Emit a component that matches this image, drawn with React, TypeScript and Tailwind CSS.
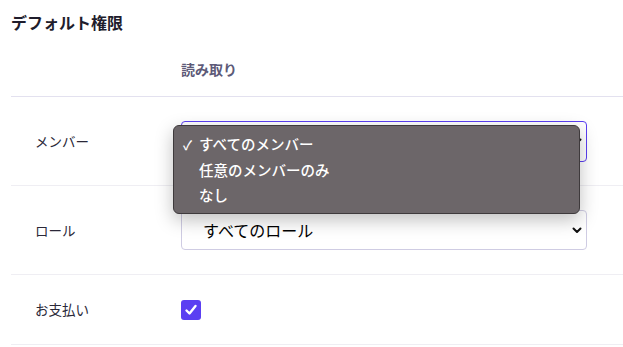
import React from "react";

const Chevron = () => (
  <svg width="10" height="7" viewBox="0 0 10 7" className="shrink-0">
    <path d="M1.5 1.5 L5 5 L8.5 1.5" fill="none" stroke="#111" strokeWidth="2" strokeLinecap="round" strokeLinejoin="round" />
  </svg>
);

const options = ["すべてのメンバー", "任意のメンバーのみ", "なし"];

const App = () => {
  return (
    <div
      className="h-[347px] w-[623px] overflow-hidden bg-white pl-[11px]"
      style={{ fontFamily: '"Noto Sans CJK JP", "Noto Sans", sans-serif' }}
    >
      <h2 className="pt-[11px] text-[16px] leading-[22px] font-bold text-[#1f1d2c]">
        デフォルト権限
      </h2>

      {/* header */}
      <div className="flex h-[64px] border-b border-[#e3e1ef] pt-[26px]">
        <div className="w-[170px]" />
        <div className="text-[14px] leading-[20px] font-bold text-[#5d5a78]">
          読み取り
        </div>
      </div>

      {/* members */}
      <div className="flex h-[89px] items-center border-b border-[#efeef3]">
        <div className="w-[170px] pl-[24px] text-[13.5px] text-[#2a2838]">メンバー</div>
        <div className="relative">
          <div className="flex h-[41px] w-[406px] items-center justify-between rounded-[4px] border-[1.5px] border-[#5b3ff2] pr-[4px] pl-[21px] text-[16px] text-black">
            <span className="invisible">すべてのメンバー</span>
            <Chevron />
          </div>

          {/* open menu */}
          <div className="absolute top-[4px] left-[-8px] w-[407px] rounded-[6px] border border-[#3e3a3c] bg-[#6c6669] pt-[6px] pb-[5px] shadow-[0_6px_18px_rgba(0,0,0,0.25)]">
            {options.map((o, i) => (
              <div key={o} className="flex h-[25.5px] items-center text-[14.5px] font-medium text-white">
                <span className="w-[25px] pl-[9px] text-[13px]">{i === 0 ? "✓" : ""}</span>
                <span>{o}</span>
              </div>
            ))}
          </div>
        </div>
      </div>

      {/* roles */}
      <div className="flex h-[89px] items-center border-b border-[#efeef3]">
        <div className="w-[170px] pl-[24px] text-[13.5px] text-[#2a2838]">ロール</div>
        <div className="flex h-[40px] w-[406px] items-center justify-between rounded-[4px] border border-[#cfcce3] pr-[4px] pl-[21px] text-[16px] text-black">
          <span>すべてのロール</span>
          <Chevron />
        </div>
      </div>

      {/* payments */}
      <div className="flex h-[70px] items-center border-b border-[#efeef3]">
        <div className="w-[170px] pl-[24px] text-[13.5px] text-[#2a2838]">お支払い</div>
        <div className="flex h-[20px] w-[20px] items-center justify-center rounded-[3px] bg-[#5b3ff2]">
          <svg width="14" height="14" viewBox="0 0 14 14">
            <path d="M2.5 7.5 L5.5 10.5 L11.5 3" fill="none" stroke="#fff" strokeWidth="2.4" strokeLinecap="round" strokeLinejoin="round" />
          </svg>
        </div>
      </div>
    </div>
  );
};

export default App;
